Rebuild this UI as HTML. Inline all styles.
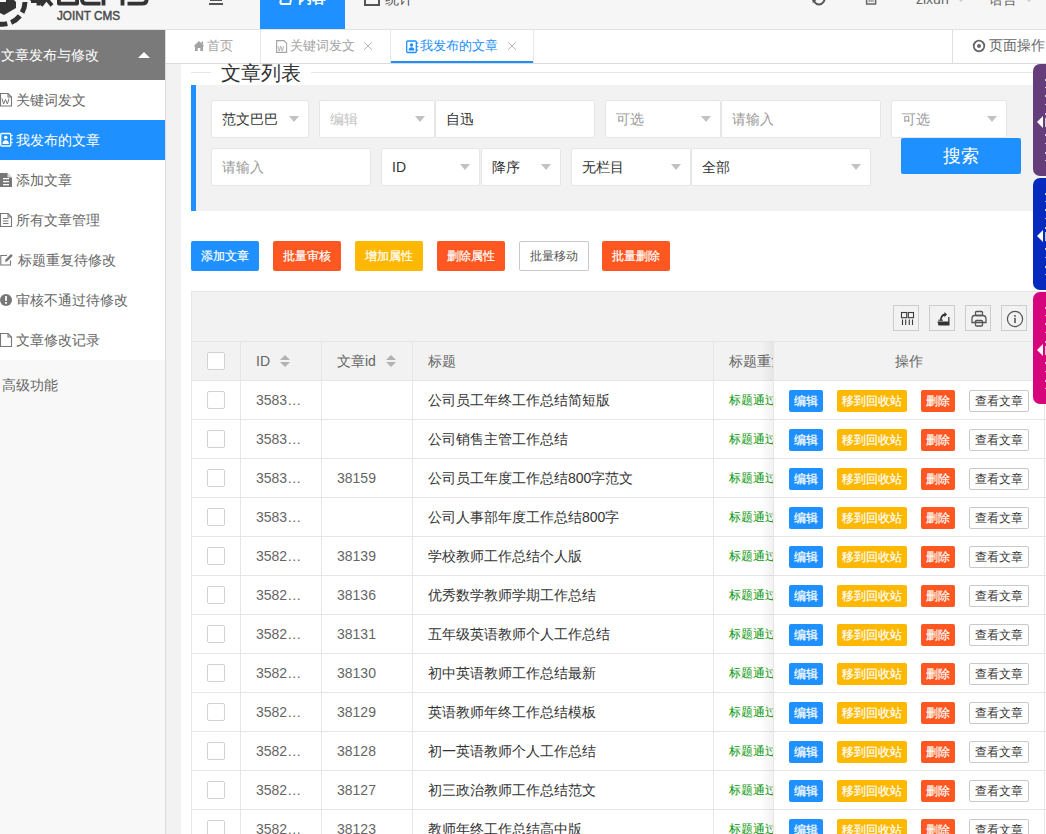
<!DOCTYPE html>
<html><head><meta charset="utf-8">
<style>
*{box-sizing:border-box;margin:0;padding:0}
html,body{width:1046px;height:834px;overflow:hidden;background:#fff;font-family:"Liberation Sans",sans-serif;font-size:14px;color:#666}
.abs{position:absolute}
#hdr{position:absolute;left:0;top:0;width:1046px;height:30px;background:#f6f6f6;border-bottom:1px solid #e2e2e2}
#side{position:absolute;left:0;top:30px;width:166px;height:804px;background:#fff;border-right:1px solid #dcdcdc}
#side .top{position:absolute;left:0;top:0;width:165px;height:50px;background:#7a7a7a;color:#fff;line-height:50px;padding-left:1px}
#side .it{position:absolute;left:0;width:165px;height:40px;line-height:40px;color:#666;white-space:nowrap}
#side .it.on{background:#1e90ff;color:#fff}
#tabs{position:absolute;left:166px;top:30px;width:880px;height:34px;background:#fff;border-bottom:1px solid #dcdcdc}
#content{position:absolute;left:166px;top:64px;width:880px;height:770px;background:#f2f2f2}
#card{position:absolute;left:181px;top:64px;width:880px;height:770px;background:#fff}
.inp{position:absolute;background:#fff;border:1px solid #e6e6e6;border-radius:2px;height:38px;line-height:36px;padding-left:10px;color:#333;white-space:nowrap}
.inp.ph{color:#999}
.car{position:absolute;right:9px;top:15px;width:0;height:0;border-left:5.5px solid transparent;border-right:5.5px solid transparent;border-top:6px solid #c2c2c2}
.btn{position:absolute;height:30px;line-height:30px;color:#fff;font-size:12px;text-align:center;border-radius:2px;-webkit-text-stroke:0.2px currentColor}
.cb{position:absolute;width:18px;height:18px;border:1px solid #d2d2d2;border-radius:2px;background:#fff}
.th{position:absolute;top:342px;height:38px;line-height:38px;color:#666;white-space:nowrap}
.td{position:absolute;height:38px;line-height:38px;color:#666;white-space:nowrap}
.bx{position:absolute;height:22px;line-height:22px;font-size:12px;color:#fff;text-align:center;border-radius:2px;white-space:nowrap;-webkit-text-stroke:0.2px currentColor}
.sort{display:inline-block;position:relative;width:10px;height:14px;margin-left:10px;vertical-align:middle}
.sort:before{content:"";position:absolute;left:0;top:0;border-left:5px solid transparent;border-right:5px solid transparent;border-bottom:5px solid #b2b2b2}
.sort:after{content:"";position:absolute;left:0;top:7px;border-left:5px solid transparent;border-right:5px solid transparent;border-top:5px solid #b2b2b2}
.stab{position:absolute;left:1033px;width:20px;border-radius:7px 0 0 7px}
.stab b{position:absolute;left:12px;width:1px;background:rgba(255,255,255,.75)}
.stab i{position:absolute;left:4px;top:51.5px;border-top:6px solid transparent;border-bottom:6px solid transparent;border-right:6px solid #fff}
</style></head><body>
<div id="hdr">
  <svg class="abs" style="left:0;top:0" width="160" height="29" viewBox="0 0 160 29">
    <path d="M2,-22 A22,22 0 0 1 24,0" fill="none" stroke="#333" stroke-width="5" stroke-dasharray="9,5"/>
    <path d="M25,2 A23,23 0 0 1 -8,22" fill="none" stroke="#333" stroke-width="5" stroke-dasharray="11,4"/>
    <path d="M-4,-6 L8,-6 L16,2 L16,8 L4,15 L-4,11 Z" fill="#333"/>
    <rect x="-2" y="-4" width="8" height="6" fill="#f6f6f6"/>
    <g fill="none" stroke="#333" stroke-width="3.8" stroke-linejoin="round">
      <path d="M31,1 H44 M38.5,-8 V5.5 M31,1 L37,-8"/>
      <path d="M41,-8 L52,5.5 M47,-2 L41,5.5"/>
      <rect x="58.9" y="-10" width="18.2" height="13.6"/>
      <path d="M100.5,3.6 H86 Q81.9,3.6 81.9,-1 V-10"/>
      <path d="M103.5,5.5 V-10 M122.5,5.5 V-10"/>
      <path d="M127.5,3.6 H142 Q146.6,3.6 146.6,0 Q146.6,-4 142,-4"/>
    </g>
    <text x="57" y="19.5" font-family="Liberation Sans" font-size="12.2" fill="#4a4a4a" stroke="#4a4a4a" stroke-width="0.45" textLength="63" lengthAdjust="spacingAndGlyphs">JOINT CMS</text>
  </svg>
  <div class="abs" style="left:209px;top:0;width:14px;height:5px">
    <div class="abs" style="left:1px;top:-1px;width:12px;height:2px;background:#555"></div>
    <div class="abs" style="left:0;top:3px;width:14px;height:2px;background:#555"></div>
  </div>
  <div class="abs" style="left:260px;top:0;width:85px;height:29px;background:#1e90ff"></div>
  <div class="abs" style="left:260px;top:-31px;width:85px;height:60px;line-height:59px;color:#fff;text-align:center;font-size:14px;font-weight:bold"><span style="display:inline-block;width:12px;height:12px;border:2px solid #fff;border-radius:0 0 0 3px;vertical-align:middle;margin-right:6px;transform:skewX(-10deg)"></span>内容</div>
  <div class="abs" style="left:364px;top:-31px;height:60px;line-height:60px;color:#555;font-size:14px"><span style="display:inline-block;width:16px;height:12px;border:2px solid #555;vertical-align:middle;margin-right:5px"></span>统计</div>
  <svg class="abs" style="left:810px;top:0" width="20" height="8" viewBox="0 0 20 8"><path d="M4,-3 A5.4,5.4 0 1 0 14,-3" fill="none" stroke="#555" stroke-width="2"/><path d="M2,-2 L7,-0.5 L2.8,3 Z" fill="#555"/></svg>
  <svg class="abs" style="left:864px;top:0" width="14" height="8" viewBox="0 0 14 8"><path d="M2.6,-6 V4 H11.6 V-6" fill="none" stroke="#666" stroke-width="1.5"/><path d="M5.2,-4 V2 M7.1,-4 V2 M9,-4 V2" stroke="#777" stroke-width="1"/></svg>
  <div class="abs" style="left:916px;top:-31px;height:60px;line-height:60px;color:#666">zixun</div>
  <div class="abs" style="left:958px;top:-1px;width:0;height:0;border-left:3px solid transparent;border-right:3px solid transparent;border-top:3px solid #ccc"></div>
  <div class="abs" style="left:989px;top:-31px;height:60px;line-height:60px;color:#666">语言</div>
  <div class="abs" style="left:1026px;top:-1px;width:0;height:0;border-left:3px solid transparent;border-right:3px solid transparent;border-top:3px solid #ccc"></div>
</div>
<div id="side">
  <div class="top">文章发布与修改<span class="abs" style="left:138px;top:22px;width:0;height:0;border-left:6px solid transparent;border-right:6px solid transparent;border-bottom:6px solid #fff"></span></div>
  <div class="it" style="top:50px;padding-left:16px">关键词发文</div>
  <div class="it on" style="top:90px;padding-left:16px">我发布的文章</div>
  <div class="it" style="top:130px;padding-left:16px">添加文章</div>
  <div class="it" style="top:170px;padding-left:16px">所有文章管理</div>
  <div class="it" style="top:210px;padding-left:18px">标题重复待修改</div>
  <div class="it" style="top:250px;padding-left:16px">审核不通过待修改</div>
  <div class="it" style="top:290px;padding-left:16px">文章修改记录</div>
  <div class="it" style="top:330px;padding-left:2px;background:#f8f8f8;height:474px;line-height:50px">高级功能</div>
</div>
<svg class="abs" style="left:0;top:90px" width="14" height="270" viewBox="0 0 14 270">
<g fill="none" stroke="#777" stroke-width="1.1">
<path d="M0.5,3.5 H8 L11.5,7 V16 H0.5 Z M8,3.5 V7 H11.5"/>
</g>
<path d="M2,8.5 L3.6,14 L5.5,9.5 L7.4,14 L9,8.5" fill="none" stroke="#777" stroke-width="1"/>
<g fill="none" stroke="#fff" stroke-width="1.3">
<rect x="0.7" y="43.5" width="10" height="12.5" rx="1"/>
</g>
<g fill="#fff"><circle cx="5.7" cy="47.5" r="1.8"/><path d="M2.5,54 Q2.5,50.2 5.7,50.2 Q8.9,50.2 8.9,54 Z"/>
<rect x="11.2" y="45" width="1.5" height="1.2"/><rect x="11.2" y="48.5" width="1.5" height="1.2"/><rect x="11.2" y="52" width="1.5" height="1.2"/></g>
<path d="M0,83 H7.5 L12,87.5 V97 H0 Z" fill="#777"/>
<g fill="#fff"><rect x="3" y="88" width="6" height="1.3"/><rect x="3" y="91" width="6" height="1.3"/><rect x="3" y="94" width="6" height="1.3"/><path d="M7.5,83 V87.5 H12 Z" fill="#fff" opacity=".7"/></g>
<g fill="none" stroke="#777" stroke-width="1.1">
<path d="M0.5,123.5 H8 L11.5,127 V136.5 H0.5 Z M8,123.5 V127 H11.5"/>
<path d="M3,128.5 H8.5 M3,131 H8.5 M3,133.5 H8.5"/>
<path d="M7,165.5 H0.8 V175 H10.5 V170.5"/>
</g>
<path d="M5,172 L5.5,169.5 L11,164 L12.8,165.8 L7.3,171.3 Z" fill="#777"/>
<circle cx="6" cy="210" r="6" fill="#777"/>
<rect x="5.1" y="206" width="1.8" height="4.8" fill="#fff"/><rect x="5.1" y="212" width="1.8" height="1.8" fill="#fff"/>
<path d="M0.5,243.5 H8 L11.5,247 V256.5 H0.5 Z M8,243.5 V247 H11.5" fill="none" stroke="#777" stroke-width="1.1"/>
</svg>
<div id="tabs">
  <div class="abs" style="left:94px;top:0;width:1px;height:33px;background:#e6e6e6"></div>
  <div class="abs" style="left:224px;top:0;width:1px;height:33px;background:#e6e6e6"></div>
  <div class="abs" style="left:367px;top:0;width:1px;height:33px;background:#e6e6e6"></div>
  <div class="abs" style="left:786px;top:0;width:1px;height:33px;background:#e0e0e0"></div>
  <div class="abs" style="left:225px;top:31px;width:142px;height:2px;background:#1e90ff"></div>
  <svg class="abs" style="left:27px;top:9px" width="12" height="14" viewBox="0 0 12 14"><path d="M6,2 L11.5,7.3 L10,7.3 L10,12 L7.3,12 L7.3,9 L4.7,9 L4.7,12 L2,12 L2,7.3 L0.5,7.3 Z" fill="#a3a3a3"/><rect x="8.5" y="2.5" width="1.6" height="3" fill="#a3a3a3"/></svg>
  <div class="abs" style="left:41px;top:0;line-height:31px;color:#a3a3a3;font-size:13px;white-space:nowrap">首页</div>
  <svg class="abs" style="left:110px;top:8px" width="14" height="16" viewBox="0 0 14 16"><path d="M0.6,2.6 H8 L10.6,5.2 V14.4 H0.6 Z" fill="none" stroke="#a3a3a3" stroke-width="1.1"/><text x="1.6" y="12.5" font-family="Liberation Sans" font-size="9" fill="#a3a3a3">w</text></svg>
  <div class="abs" style="left:124px;top:0;line-height:31px;color:#a3a3a3;font-size:13px;white-space:nowrap">关键词发文</div>
  <svg class="abs" style="left:197px;top:11px" width="10" height="10" viewBox="0 0 10 10"><path d="M1.2,1.2 L8.8,8.8 M8.8,1.2 L1.2,8.8" stroke="#b8b8b8" stroke-width="1"/></svg>
  <svg class="abs" style="left:240px;top:8px" width="14" height="16" viewBox="0 0 14 16"><rect x="0.7" y="3" width="9.6" height="11.5" rx="1" fill="none" stroke="#1e90ff" stroke-width="1.3"/><circle cx="5.5" cy="7" r="1.7" fill="#1e90ff"/><path d="M2.6,12.5 Q2.6,9.3 5.5,9.3 Q8.4,9.3 8.4,12.5 Z" fill="#1e90ff"/><rect x="10.8" y="4.5" width="1.4" height="1.2" fill="#1e90ff"/><rect x="10.8" y="8" width="1.4" height="1.2" fill="#1e90ff"/><rect x="10.8" y="11.5" width="1.4" height="1.2" fill="#1e90ff"/></svg>
  <div class="abs" style="left:254px;top:0;line-height:31px;color:#1e90ff;font-size:13px;white-space:nowrap">我发布的文章</div>
  <svg class="abs" style="left:341px;top:11px" width="10" height="10" viewBox="0 0 10 10"><path d="M1.2,1.2 L8.8,8.8 M8.8,1.2 L1.2,8.8" stroke="#b8b8b8" stroke-width="1"/></svg>
  <svg class="abs" style="left:806px;top:9px" width="14" height="14" viewBox="0 0 14 14"><circle cx="7" cy="7" r="5.3" fill="none" stroke="#666" stroke-width="1.8"/><circle cx="7" cy="7" r="2" fill="#666"/></svg>
  <div class="abs" style="left:823px;top:0;line-height:31px;color:#666;font-size:14px;white-space:nowrap">页面操作</div>
</div>
<div id="content"></div>
<div id="card"></div>
<div class="abs" style="left:191px;top:72px;width:20px;height:1px;background:#e6e6e6"></div>
<div class="abs" style="left:311px;top:72px;width:735px;height:1px;background:#e6e6e6"></div>
<div class="abs" style="left:221px;top:58px;font-size:20px;line-height:30px;color:#333;white-space:nowrap">文章列表</div>
<div class="abs" style="left:191px;top:85px;width:860px;height:126px;background:#f2f2f2;border-left:5px solid #1e90ff"></div>
<div class="inp" style="left:211px;top:100px;width:98px">范文巴巴<i class="car"></i></div>
<div class="inp ph" style="left:319px;top:100px;width:116px;color:#c2c2c2">编辑<i class="car"></i></div>
<div class="inp" style="left:435px;top:100px;width:160px">自迅</div>
<div class="inp ph" style="left:605px;top:100px;width:116px">可选<i class="car"></i></div>
<div class="inp ph" style="left:721px;top:100px;width:160px">请输入</div>
<div class="inp ph" style="left:891px;top:100px;width:116px">可选<i class="car"></i></div>
<div class="inp ph" style="left:211px;top:148px;width:160px">请输入</div>
<div class="inp" style="left:381px;top:148px;width:99px">ID<i class="car"></i></div>
<div class="inp" style="left:481px;top:148px;width:80px">降序<i class="car"></i></div>
<div class="inp" style="left:571px;top:148px;width:120px">无栏目<i class="car"></i></div>
<div class="inp" style="left:691px;top:148px;width:180px">全部<i class="car"></i></div>
<div class="abs" style="left:901px;top:138px;width:120px;height:36px;line-height:36px;background:#1e90ff;color:#fff;font-size:18px;text-align:center;border-radius:2px">搜索</div>
<div class="btn" style="left:191px;top:241px;width:68px;background:#1e90ff">添加文章</div>
<div class="btn" style="left:273px;top:241px;width:68px;background:#ff5722">批量审核</div>
<div class="btn" style="left:355px;top:241px;width:68px;background:#ffb800">增加属性</div>
<div class="btn" style="left:437px;top:241px;width:68px;background:#ff5722">删除属性</div>
<div class="btn" style="left:519px;top:241px;width:70px;background:#fff;border:1px solid #c9c9c9;color:#555;line-height:28px;-webkit-text-stroke:0">批量移动</div>
<div class="btn" style="left:602px;top:241px;width:68px;background:#ff5722">批量删除</div>
<div class="abs" style="left:191px;top:291px;width:860px;height:600px;border:1px solid #e6e6e6;background:#fff"></div>
<div class="abs" style="left:192px;top:292px;width:860px;height:50px;background:#f2f2f2;border-bottom:1px solid #e6e6e6"></div>
<div class="abs" style="left:192px;top:342px;width:860px;height:38px;background:#f2f2f2"></div>
<div class="abs" style="left:192px;top:380px;width:860px;height:1px;background:#e6e6e6"></div>
<div class="abs" style="left:192px;top:419px;width:860px;height:1px;background:#e6e6e6"></div>
<div class="abs" style="left:192px;top:458px;width:860px;height:1px;background:#e6e6e6"></div>
<div class="abs" style="left:192px;top:497px;width:860px;height:1px;background:#e6e6e6"></div>
<div class="abs" style="left:192px;top:536px;width:860px;height:1px;background:#e6e6e6"></div>
<div class="abs" style="left:192px;top:575px;width:860px;height:1px;background:#e6e6e6"></div>
<div class="abs" style="left:192px;top:614px;width:860px;height:1px;background:#e6e6e6"></div>
<div class="abs" style="left:192px;top:653px;width:860px;height:1px;background:#e6e6e6"></div>
<div class="abs" style="left:192px;top:692px;width:860px;height:1px;background:#e6e6e6"></div>
<div class="abs" style="left:192px;top:731px;width:860px;height:1px;background:#e6e6e6"></div>
<div class="abs" style="left:192px;top:770px;width:860px;height:1px;background:#e6e6e6"></div>
<div class="abs" style="left:192px;top:809px;width:860px;height:1px;background:#e6e6e6"></div>
<div class="abs" style="left:240px;top:342px;width:1px;height:500px;background:#e6e6e6"></div>
<div class="abs" style="left:321px;top:342px;width:1px;height:500px;background:#e6e6e6"></div>
<div class="abs" style="left:412px;top:342px;width:1px;height:500px;background:#e6e6e6"></div>
<div class="abs" style="left:713px;top:342px;width:1px;height:500px;background:#e6e6e6"></div>
<i class="cb" style="left:207px;top:352px"></i>
<div class="th" style="left:256px">ID<i class="sort"></i></div>
<div class="th" style="left:337px">文章id<i class="sort"></i></div>
<div class="th" style="left:428px">标题</div>
<div class="th" style="left:729px">标题重复</div>
<i class="cb" style="left:207px;top:391px"></i>
<div class="td" style="left:256px;top:381px">3583…</div>
<div class="td" style="left:428px;top:381px;color:#333">公司员工年终工作总结简短版</div>
<div class="td" style="left:729px;top:381px;color:#0a960a;font-size:12px">标题通过</div>
<i class="cb" style="left:207px;top:430px"></i>
<div class="td" style="left:256px;top:420px">3583…</div>
<div class="td" style="left:428px;top:420px;color:#333">公司销售主管工作总结</div>
<div class="td" style="left:729px;top:420px;color:#0a960a;font-size:12px">标题通过</div>
<i class="cb" style="left:207px;top:469px"></i>
<div class="td" style="left:256px;top:459px">3583…</div>
<div class="td" style="left:337px;top:459px">38159</div>
<div class="td" style="left:428px;top:459px;color:#333">公司员工年度工作总结800字范文</div>
<div class="td" style="left:729px;top:459px;color:#0a960a;font-size:12px">标题通过</div>
<i class="cb" style="left:207px;top:508px"></i>
<div class="td" style="left:256px;top:498px">3583…</div>
<div class="td" style="left:428px;top:498px;color:#333">公司人事部年度工作总结800字</div>
<div class="td" style="left:729px;top:498px;color:#0a960a;font-size:12px">标题通过</div>
<i class="cb" style="left:207px;top:547px"></i>
<div class="td" style="left:256px;top:537px">3582…</div>
<div class="td" style="left:337px;top:537px">38139</div>
<div class="td" style="left:428px;top:537px;color:#333">学校教师工作总结个人版</div>
<div class="td" style="left:729px;top:537px;color:#0a960a;font-size:12px">标题通过</div>
<i class="cb" style="left:207px;top:586px"></i>
<div class="td" style="left:256px;top:576px">3582…</div>
<div class="td" style="left:337px;top:576px">38136</div>
<div class="td" style="left:428px;top:576px;color:#333">优秀数学教师学期工作总结</div>
<div class="td" style="left:729px;top:576px;color:#0a960a;font-size:12px">标题通过</div>
<i class="cb" style="left:207px;top:625px"></i>
<div class="td" style="left:256px;top:615px">3582…</div>
<div class="td" style="left:337px;top:615px">38131</div>
<div class="td" style="left:428px;top:615px;color:#333">五年级英语教师个人工作总结</div>
<div class="td" style="left:729px;top:615px;color:#0a960a;font-size:12px">标题通过</div>
<i class="cb" style="left:207px;top:664px"></i>
<div class="td" style="left:256px;top:654px">3582…</div>
<div class="td" style="left:337px;top:654px">38130</div>
<div class="td" style="left:428px;top:654px;color:#333">初中英语教师工作总结最新</div>
<div class="td" style="left:729px;top:654px;color:#0a960a;font-size:12px">标题通过</div>
<i class="cb" style="left:207px;top:703px"></i>
<div class="td" style="left:256px;top:693px">3582…</div>
<div class="td" style="left:337px;top:693px">38129</div>
<div class="td" style="left:428px;top:693px;color:#333">英语教师年终工作总结模板</div>
<div class="td" style="left:729px;top:693px;color:#0a960a;font-size:12px">标题通过</div>
<i class="cb" style="left:207px;top:742px"></i>
<div class="td" style="left:256px;top:732px">3582…</div>
<div class="td" style="left:337px;top:732px">38128</div>
<div class="td" style="left:428px;top:732px;color:#333">初一英语教师个人工作总结</div>
<div class="td" style="left:729px;top:732px;color:#0a960a;font-size:12px">标题通过</div>
<i class="cb" style="left:207px;top:781px"></i>
<div class="td" style="left:256px;top:771px">3582…</div>
<div class="td" style="left:337px;top:771px">38127</div>
<div class="td" style="left:428px;top:771px;color:#333">初三政治教师工作总结范文</div>
<div class="td" style="left:729px;top:771px;color:#0a960a;font-size:12px">标题通过</div>
<i class="cb" style="left:207px;top:820px"></i>
<div class="td" style="left:256px;top:810px">3582…</div>
<div class="td" style="left:337px;top:810px">38123</div>
<div class="td" style="left:428px;top:810px;color:#333">教师年终工作总结高中版</div>
<div class="td" style="left:729px;top:810px;color:#0a960a;font-size:12px">标题通过</div>
<div class="abs" style="left:773px;top:342px;width:272px;height:500px;background:#fff;border-left:1px solid #e6e6e6;border-right:1px solid #e6e6e6"></div>
<div class="abs" style="left:761px;top:342px;width:12px;height:500px;background:linear-gradient(to right,rgba(0,0,0,0),rgba(0,0,0,.05))"></div>
<div class="abs" style="left:774px;top:342px;width:270px;height:38px;background:#f2f2f2"></div>
<div class="abs" style="left:774px;top:380px;width:270px;height:1px;background:#e6e6e6"></div>
<div class="abs" style="left:774px;top:419px;width:270px;height:1px;background:#e6e6e6"></div>
<div class="abs" style="left:774px;top:458px;width:270px;height:1px;background:#e6e6e6"></div>
<div class="abs" style="left:774px;top:497px;width:270px;height:1px;background:#e6e6e6"></div>
<div class="abs" style="left:774px;top:536px;width:270px;height:1px;background:#e6e6e6"></div>
<div class="abs" style="left:774px;top:575px;width:270px;height:1px;background:#e6e6e6"></div>
<div class="abs" style="left:774px;top:614px;width:270px;height:1px;background:#e6e6e6"></div>
<div class="abs" style="left:774px;top:653px;width:270px;height:1px;background:#e6e6e6"></div>
<div class="abs" style="left:774px;top:692px;width:270px;height:1px;background:#e6e6e6"></div>
<div class="abs" style="left:774px;top:731px;width:270px;height:1px;background:#e6e6e6"></div>
<div class="abs" style="left:774px;top:770px;width:270px;height:1px;background:#e6e6e6"></div>
<div class="abs" style="left:774px;top:809px;width:270px;height:1px;background:#e6e6e6"></div>
<div class="th" style="left:774px;width:270px;text-align:center">操作</div>
<div class="bx" style="left:789px;top:390px;width:34px;background:#1e90ff">编辑</div>
<div class="bx" style="left:837px;top:390px;width:70px;background:#ffb800">移到回收站</div>
<div class="bx" style="left:921px;top:390px;width:34px;background:#ff5722">删除</div>
<div class="bx" style="left:969px;top:390px;width:60px;background:#fff;border:1px solid #c9c9c9;color:#333;line-height:21px;-webkit-text-stroke:0">查看文章</div>
<div class="bx" style="left:789px;top:429px;width:34px;background:#1e90ff">编辑</div>
<div class="bx" style="left:837px;top:429px;width:70px;background:#ffb800">移到回收站</div>
<div class="bx" style="left:921px;top:429px;width:34px;background:#ff5722">删除</div>
<div class="bx" style="left:969px;top:429px;width:60px;background:#fff;border:1px solid #c9c9c9;color:#333;line-height:21px;-webkit-text-stroke:0">查看文章</div>
<div class="bx" style="left:789px;top:468px;width:34px;background:#1e90ff">编辑</div>
<div class="bx" style="left:837px;top:468px;width:70px;background:#ffb800">移到回收站</div>
<div class="bx" style="left:921px;top:468px;width:34px;background:#ff5722">删除</div>
<div class="bx" style="left:969px;top:468px;width:60px;background:#fff;border:1px solid #c9c9c9;color:#333;line-height:21px;-webkit-text-stroke:0">查看文章</div>
<div class="bx" style="left:789px;top:507px;width:34px;background:#1e90ff">编辑</div>
<div class="bx" style="left:837px;top:507px;width:70px;background:#ffb800">移到回收站</div>
<div class="bx" style="left:921px;top:507px;width:34px;background:#ff5722">删除</div>
<div class="bx" style="left:969px;top:507px;width:60px;background:#fff;border:1px solid #c9c9c9;color:#333;line-height:21px;-webkit-text-stroke:0">查看文章</div>
<div class="bx" style="left:789px;top:546px;width:34px;background:#1e90ff">编辑</div>
<div class="bx" style="left:837px;top:546px;width:70px;background:#ffb800">移到回收站</div>
<div class="bx" style="left:921px;top:546px;width:34px;background:#ff5722">删除</div>
<div class="bx" style="left:969px;top:546px;width:60px;background:#fff;border:1px solid #c9c9c9;color:#333;line-height:21px;-webkit-text-stroke:0">查看文章</div>
<div class="bx" style="left:789px;top:585px;width:34px;background:#1e90ff">编辑</div>
<div class="bx" style="left:837px;top:585px;width:70px;background:#ffb800">移到回收站</div>
<div class="bx" style="left:921px;top:585px;width:34px;background:#ff5722">删除</div>
<div class="bx" style="left:969px;top:585px;width:60px;background:#fff;border:1px solid #c9c9c9;color:#333;line-height:21px;-webkit-text-stroke:0">查看文章</div>
<div class="bx" style="left:789px;top:624px;width:34px;background:#1e90ff">编辑</div>
<div class="bx" style="left:837px;top:624px;width:70px;background:#ffb800">移到回收站</div>
<div class="bx" style="left:921px;top:624px;width:34px;background:#ff5722">删除</div>
<div class="bx" style="left:969px;top:624px;width:60px;background:#fff;border:1px solid #c9c9c9;color:#333;line-height:21px;-webkit-text-stroke:0">查看文章</div>
<div class="bx" style="left:789px;top:663px;width:34px;background:#1e90ff">编辑</div>
<div class="bx" style="left:837px;top:663px;width:70px;background:#ffb800">移到回收站</div>
<div class="bx" style="left:921px;top:663px;width:34px;background:#ff5722">删除</div>
<div class="bx" style="left:969px;top:663px;width:60px;background:#fff;border:1px solid #c9c9c9;color:#333;line-height:21px;-webkit-text-stroke:0">查看文章</div>
<div class="bx" style="left:789px;top:702px;width:34px;background:#1e90ff">编辑</div>
<div class="bx" style="left:837px;top:702px;width:70px;background:#ffb800">移到回收站</div>
<div class="bx" style="left:921px;top:702px;width:34px;background:#ff5722">删除</div>
<div class="bx" style="left:969px;top:702px;width:60px;background:#fff;border:1px solid #c9c9c9;color:#333;line-height:21px;-webkit-text-stroke:0">查看文章</div>
<div class="bx" style="left:789px;top:741px;width:34px;background:#1e90ff">编辑</div>
<div class="bx" style="left:837px;top:741px;width:70px;background:#ffb800">移到回收站</div>
<div class="bx" style="left:921px;top:741px;width:34px;background:#ff5722">删除</div>
<div class="bx" style="left:969px;top:741px;width:60px;background:#fff;border:1px solid #c9c9c9;color:#333;line-height:21px;-webkit-text-stroke:0">查看文章</div>
<div class="bx" style="left:789px;top:780px;width:34px;background:#1e90ff">编辑</div>
<div class="bx" style="left:837px;top:780px;width:70px;background:#ffb800">移到回收站</div>
<div class="bx" style="left:921px;top:780px;width:34px;background:#ff5722">删除</div>
<div class="bx" style="left:969px;top:780px;width:60px;background:#fff;border:1px solid #c9c9c9;color:#333;line-height:21px;-webkit-text-stroke:0">查看文章</div>
<div class="bx" style="left:789px;top:819px;width:34px;background:#1e90ff">编辑</div>
<div class="bx" style="left:837px;top:819px;width:70px;background:#ffb800">移到回收站</div>
<div class="bx" style="left:921px;top:819px;width:34px;background:#ff5722">删除</div>
<div class="bx" style="left:969px;top:819px;width:60px;background:#fff;border:1px solid #c9c9c9;color:#333;line-height:21px;-webkit-text-stroke:0">查看文章</div>
<div class="abs" style="left:893px;top:305px;width:26px;height:26px;border:1px solid #ccc"></div>
<div class="abs" style="left:929px;top:305px;width:26px;height:26px;border:1px solid #ccc"></div>
<div class="abs" style="left:965px;top:305px;width:26px;height:26px;border:1px solid #ccc"></div>
<div class="abs" style="left:1001px;top:305px;width:26px;height:26px;border:1px solid #ccc"></div>
<svg class="abs" style="left:893px;top:305px" width="136" height="26" viewBox="0 0 136 26">
<g fill="none" stroke="#3a3a3a" stroke-width="1.1">
<rect x="8.5" y="7.5" width="5.2" height="5.2"/><rect x="15.3" y="7.5" width="5.2" height="5.2"/>
<path d="M9.5,14.5 V20 M12.7,14.5 V20 M16.3,14.5 V20 M19.5,14.5 V20"/>
</g>
<g fill="#333">
<path d="M44.5,16.5 L55.2,16.5 L55.2,12 L56.5,12 L56.5,20.5 L45.5,20.5 Z"/><path d="M45.2,15.2 H50" stroke="#333" stroke-width="1"/>
<path d="M47,15.5 L48.6,15.5 Q48.8,11.3 51.5,10.8 L51.5,12.3 L54,9.6 L51.5,7 L51.5,8.6 Q47.2,9.5 47,15.5 Z"/>
</g>
<g fill="none" stroke="#555" stroke-width="1.3">
<path d="M81.5,10.5 H89.5 Q93,10.5 93,14 V17.5 H79 V14 Q79,10.5 81.5,10.5 Z"/>
<rect x="82.5" y="6.5" width="7" height="4" rx="1"/>
<rect x="82.5" y="15.5" width="7" height="5.5" rx="1"/>
</g>
<g>
<circle cx="122" cy="14" r="7.6" fill="none" stroke="#555" stroke-width="1.2"/>
<rect x="121.2" y="10" width="1.6" height="1.7" fill="#555"/>
<rect x="121.2" y="12.8" width="1.6" height="5.2" fill="#555"/>
</g>
</svg>
<div class="stab" style="top:64px;height:112px;background:#663d7b"><i></i><b style="top:15px;height:2px"></b><b style="top:23px;height:1px"></b><b style="top:31px;height:2px"></b><b style="top:40px;height:1px"></b><b style="top:49px;height:2px"></b><b style="top:54px;height:9px"></b><b style="top:70px;height:2px"></b><b style="top:79px;height:1px"></b><b style="top:88px;height:2px"></b><b style="top:96px;height:1px"></b></div>
<div class="stab" style="top:178px;height:112px;background:#062abd"><i></i><b style="top:15px;height:2px"></b><b style="top:23px;height:1px"></b><b style="top:31px;height:2px"></b><b style="top:40px;height:1px"></b><b style="top:49px;height:2px"></b><b style="top:54px;height:9px"></b><b style="top:70px;height:2px"></b><b style="top:79px;height:1px"></b><b style="top:88px;height:2px"></b><b style="top:96px;height:1px"></b></div>
<div class="stab" style="top:292px;height:112px;background:#d6057c"><i></i><b style="top:15px;height:2px"></b><b style="top:23px;height:1px"></b><b style="top:31px;height:2px"></b><b style="top:40px;height:1px"></b><b style="top:49px;height:2px"></b><b style="top:54px;height:9px"></b><b style="top:70px;height:2px"></b><b style="top:79px;height:1px"></b><b style="top:88px;height:2px"></b><b style="top:96px;height:1px"></b></div>
</body></html>
